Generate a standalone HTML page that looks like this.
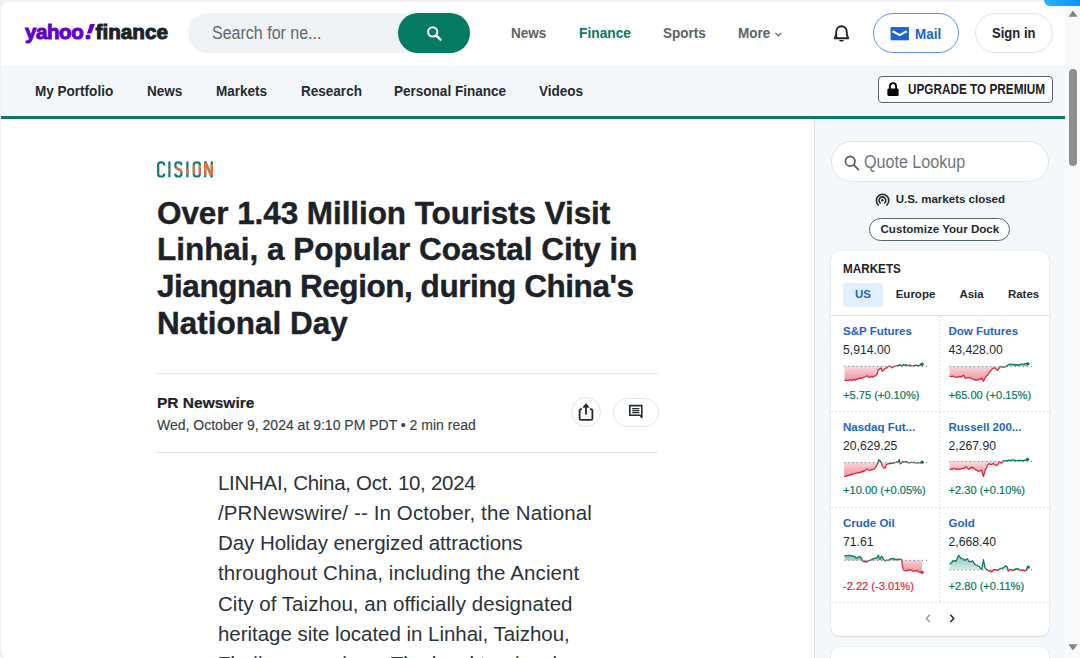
<!DOCTYPE html>
<html><head><meta charset="utf-8"><style>
html,body{margin:0;padding:0;}
body{width:1080px;height:658px;overflow:hidden;position:relative;background:#f0f0f0;font-family:"Liberation Sans",sans-serif;}
.t{position:absolute;white-space:nowrap;}
</style></head><body>
<div style="position:absolute;left:0px;top:1px;width:1080px;height:1px;background:#f6f6f6;"></div>
<div style="position:absolute;left:1px;top:2px;width:1079px;height:657px;background:#fff;border-top-left-radius:8px;border-bottom-left-radius:8px;"></div>
<div style="position:absolute;left:1px;top:66px;width:1064px;height:50px;background:#f4f7fa;"></div>
<div style="position:absolute;left:1px;top:116px;width:1064px;height:3px;background:#047a62;"></div>
<div style="position:absolute;left:814px;top:119px;width:1px;height:539px;background:#e0e4e9;"></div>
<div style="position:absolute;left:815px;top:119px;width:250px;height:539px;background:#f5f8fa;"></div>
<div style="position:absolute;left:1065px;top:6px;width:15px;height:652px;background:#fafafa;"></div>
<svg style="position:absolute;left:1068px;top:10px" width="10" height="7" viewBox="0 0 10 7"><path d="M5 0.5 L9.6 6.8 L0.4 6.8 Z" fill="#858585"/></svg>
<div style="position:absolute;left:1069px;top:69px;width:8px;height:97px;background:#8e8e8e;border-radius:4px;"></div>
<svg style="position:absolute;left:1068px;top:644px" width="10" height="7" viewBox="0 0 10 7"><path d="M0.4 0.2 L9.6 0.2 L5 6.5 Z" fill="#858585"/></svg>
<div style="position:absolute;left:1044px;top:-6px;width:40px;height:12px;background:linear-gradient(90deg,#2db3ff,#0a8fff);border-radius:6px;"></div>
<div class="t" style="left:25px;top:22.04px;font-size:20.5px;line-height:20.5px;font-weight:700;color:#6001d2;-webkit-text-stroke:1px #6001d2;letter-spacing:-0.4px;">yahoo</div>
<svg style="position:absolute;left:85px;top:23px" width="12" height="18" viewBox="0 0 12 18"><path d="M5.1 1 L10 1 L6.4 10.5 L2 10.5 Z" fill="#6001d2"/><circle cx="3" cy="14.1" r="2.5" fill="#6001d2"/></svg>
<div class="t" style="left:95.5px;top:21.87px;font-size:20.7px;line-height:20.7px;font-weight:700;color:#1d2228;-webkit-text-stroke:1px #1d2228;letter-spacing:0px;">finance</div>
<div style="position:absolute;left:188px;top:13px;width:282px;height:40px;background:#f0f3f5;border-radius:20px;"></div>
<div class="t" style="left:212px;top:24.88px;font-size:17.5px;line-height:17.5px;color:#5f676e;transform:scaleX(0.915);transform-origin:0 0;">Search for ne...</div>
<div style="position:absolute;left:398px;top:13px;width:72px;height:40px;background:#047a62;border-radius:20px;"></div>
<svg style="position:absolute;left:425px;top:24px" width="18" height="18" viewBox="0 0 18 18"><circle cx="7.7" cy="7.9" r="4.6" fill="none" stroke="#fff" stroke-width="2.1"/><path d="M11 11.3 L15.5 15.6" stroke="#fff" stroke-width="2.3" stroke-linecap="round"/></svg>
<div class="t" style="left:511px;top:26.32px;font-size:14.5px;line-height:14.5px;font-weight:700;color:#5b636a;transform:scaleX(0.93);transform-origin:0 0;">News</div>
<div class="t" style="left:578.6px;top:26.27px;font-size:14.8px;line-height:14.8px;font-weight:700;color:#047a62;transform:scaleX(0.93);transform-origin:0 0;">Finance</div>
<div class="t" style="left:662.5px;top:26.32px;font-size:14.5px;line-height:14.5px;font-weight:700;color:#5b636a;transform:scaleX(0.93);transform-origin:0 0;">Sports</div>
<div class="t" style="left:737.8px;top:26.32px;font-size:14.5px;line-height:14.5px;font-weight:700;color:#5b636a;transform:scaleX(0.93);transform-origin:0 0;">More</div>
<svg style="position:absolute;left:774px;top:31px" width="9" height="7" viewBox="0 0 9 7"><path d="M1.4 1.8 L4.3 4.8 L7.2 1.8" fill="none" stroke="#5b636a" stroke-width="1.15"/></svg>
<svg style="position:absolute;left:833px;top:24px" width="17" height="19" viewBox="0 0 17 19"><path d="M3.2 13.5 V8 C3.2 4.6 5.4 2.2 8.5 2.2 C11.6 2.2 13.8 4.6 13.8 8 V10.5 L15.2 14.2 H1.8 L3.2 11" fill="none" stroke="#1d2228" stroke-width="1.9" stroke-linejoin="round"/><path d="M6 16 H11 C10.5 17.2 9.6 17.6 8.5 17.6 C7.4 17.6 6.5 17.2 6 16 Z" fill="#1d2228"/></svg>
<div style="position:absolute;left:872.5px;top:13px;width:86px;height:40px;box-sizing:border-box;border:1px solid #5b93e6;border-radius:20px;"></div>
<svg style="position:absolute;left:890px;top:27px" width="19" height="14" viewBox="0 0 19 14"><rect x="0.6" y="0.1" width="18.3" height="13.2" fill="#1a63d9"/><path d="M2.6 4.2 L9.7 8.1 L16.7 4.2" fill="none" stroke="#fff" stroke-width="2.2"/></svg>
<div class="t" style="left:914.7px;top:26.79px;font-size:14.3px;line-height:14.3px;font-weight:700;color:#1a63d9;transform:scaleX(0.94);transform-origin:0 0;">Mail</div>
<div style="position:absolute;left:975px;top:13px;width:78px;height:40px;box-sizing:border-box;border:1px solid #e0e4e9;border-radius:20px;"></div>
<div class="t" style="left:992px;top:26.18px;font-size:14.2px;line-height:14.2px;font-weight:700;color:#1d2228;transform:scaleX(0.92);transform-origin:0 0;">Sign in</div>
<div class="t" style="left:35.3px;top:83.96px;font-size:14.1px;line-height:14.1px;font-weight:700;color:#232a31;transform:scaleX(0.96);transform-origin:0 0;">My Portfolio</div>
<div class="t" style="left:147.4px;top:83.96px;font-size:14.1px;line-height:14.1px;font-weight:700;color:#232a31;transform:scaleX(0.96);transform-origin:0 0;">News</div>
<div class="t" style="left:215.7px;top:83.96px;font-size:14.1px;line-height:14.1px;font-weight:700;color:#232a31;transform:scaleX(0.96);transform-origin:0 0;">Markets</div>
<div class="t" style="left:301px;top:83.96px;font-size:14.1px;line-height:14.1px;font-weight:700;color:#232a31;transform:scaleX(0.96);transform-origin:0 0;">Research</div>
<div class="t" style="left:394px;top:83.96px;font-size:14.1px;line-height:14.1px;font-weight:700;color:#232a31;transform:scaleX(0.96);transform-origin:0 0;">Personal Finance</div>
<div class="t" style="left:539px;top:83.96px;font-size:14.1px;line-height:14.1px;font-weight:700;color:#232a31;transform:scaleX(0.96);transform-origin:0 0;">Videos</div>
<div style="position:absolute;left:878px;top:76px;width:175px;height:27px;box-sizing:border-box;background:#fff;border:1px solid #5b636a;border-radius:4px;"></div>
<svg style="position:absolute;left:886px;top:81px" width="14" height="16" viewBox="0 0 14 16"><path d="M3.9 8 V5.6 C3.9 3.4 5.2 2.2 7 2.2 C8.8 2.2 10.1 3.4 10.1 5.6 V8" fill="none" stroke="#000" stroke-width="1.8"/><rect x="1.4" y="7.6" width="11.2" height="7.4" rx="1.2" fill="#000"/></svg>
<div class="t" style="left:907.5px;top:82.15px;font-size:14px;line-height:14px;font-weight:700;color:#1d2228;transform:scaleX(0.84);transform-origin:0 0;">UPGRADE TO PREMIUM</div>
<svg style="position:absolute;left:155px;top:159px" width="64" height="21" viewBox="0 0 64 21">
<defs><clipPath id="cl"><rect x="0" y="9.3" width="64" height="2.5"/></clipPath></defs>
</svg>
<div class="t" style="left:157px;top:197.63px;font-size:31.5px;line-height:31.5px;font-weight:700;color:#1d2228;letter-spacing:-0.08px;-webkit-text-stroke:0.4px #1d2228;">Over 1.43 Million Tourists Visit</div>
<div class="t" style="left:157px;top:233.93px;font-size:31.5px;line-height:31.5px;font-weight:700;color:#1d2228;letter-spacing:-0.03px;-webkit-text-stroke:0.4px #1d2228;">Linhai, a Popular Coastal City in</div>
<div class="t" style="left:157px;top:270.73px;font-size:31.5px;line-height:31.5px;font-weight:700;color:#1d2228;letter-spacing:-0.45px;-webkit-text-stroke:0.4px #1d2228;">Jiangnan Region, during China's</div>
<div class="t" style="left:157px;top:307.73px;font-size:31.5px;line-height:31.5px;font-weight:700;color:#1d2228;letter-spacing:0.0px;-webkit-text-stroke:0.4px #1d2228;">National Day</div>
<div style="position:absolute;left:156px;top:373px;width:502px;height:1px;background:#e0e4e9;"></div>
<div class="t" style="left:157px;top:394.88px;font-size:15.5px;line-height:15.5px;font-weight:700;color:#1d2228;-webkit-text-stroke:0.2px #1d2228;">PR Newswire</div>
<div class="t" style="left:157px;top:417.55px;font-size:14px;line-height:14px;color:#3a4249;-webkit-text-stroke:0.15px #3a4249;">Wed, October 9, 2024 at 9:10 PM PDT &bull; 2 min read</div>
<div style="position:absolute;left:571px;top:397px;width:30px;height:30px;box-sizing:border-box;border:1px solid #e0e4e9;border-radius:15px;"></div>
<div style="position:absolute;left:612.5px;top:398px;width:46px;height:29px;box-sizing:border-box;border:1px solid #e0e4e9;border-radius:15px;"></div>
<div style="position:absolute;left:156px;top:452px;width:502px;height:1px;background:#e0e4e9;"></div>
<div class="t" style="left:218px;top:472.94px;font-size:20.5px;line-height:20.5px;color:#2b333b;letter-spacing:-0.29px;">LINHAI, China, Oct. 10, 2024</div>
<div class="t" style="left:218px;top:503.12px;font-size:20.5px;line-height:20.5px;color:#2b333b;letter-spacing:0.12px;">/PRNewswire/ -- In October, the National</div>
<div class="t" style="left:218px;top:533.30px;font-size:20.5px;line-height:20.5px;color:#2b333b;letter-spacing:-0.06px;">Day Holiday energized attractions</div>
<div class="t" style="left:218px;top:563.48px;font-size:20.5px;line-height:20.5px;color:#2b333b;letter-spacing:0.12px;">throughout China, including the Ancient</div>
<div class="t" style="left:218px;top:593.66px;font-size:20.5px;line-height:20.5px;color:#2b333b;letter-spacing:0.05px;">City of Taizhou, an officially designated</div>
<div class="t" style="left:218px;top:623.84px;font-size:20.5px;line-height:20.5px;color:#2b333b;letter-spacing:-0.03px;">heritage site located in Linhai, Taizhou,</div>
<div class="t" style="left:218px;top:654.02px;font-size:20.5px;line-height:20.5px;color:#2b333b;letter-spacing:0px;">Zhejiang province. The local tourism bureau</div>
<div style="position:absolute;left:830.6px;top:141.2px;width:218.2px;height:40.5px;box-sizing:border-box;background:#fff;border:1px solid #e0e4e9;border-radius:21px;"></div>
<svg style="position:absolute;left:843px;top:154px" width="18" height="18" viewBox="0 0 18 18"><circle cx="7.2" cy="7.3" r="4.8" fill="none" stroke="#5b636a" stroke-width="1.8"/><path d="M10.6 10.8 L15.4 15.6" stroke="#5b636a" stroke-width="1.9" stroke-linecap="round"/></svg>
<div class="t" style="left:864px;top:153.06px;font-size:18px;line-height:18px;color:#6e7780;transform:scaleX(0.895);transform-origin:0 0;">Quote Lookup</div>
<div class="t" style="left:895.7px;top:193.86px;font-size:11.5px;line-height:11.5px;font-weight:700;color:#232a31;">U.S. markets closed</div>
<div style="position:absolute;left:869.4px;top:217.7px;width:140.6px;height:23.3px;box-sizing:border-box;background:#fff;border:1px solid #5b636a;border-radius:12px;"></div>
<div class="t" style="left:880.5px;top:223.38px;font-size:11.6px;line-height:11.6px;font-weight:700;color:#232a31;">Customize Your Dock</div>
<div style="position:absolute;left:830.6px;top:251.2px;width:218.4px;height:385px;background:#fff;border-radius:8px;box-shadow:0 0 1px rgba(0,0,0,0.18),0 1px 2px rgba(0,0,0,0.1);"></div>
<div style="position:absolute;left:830.6px;top:647px;width:218.4px;height:30px;background:#fff;border-radius:8px;box-shadow:0 0 1px rgba(0,0,0,0.18),0 1px 2px rgba(0,0,0,0.1);"></div>
<div class="t" style="left:842.8px;top:261.94px;font-size:13.3px;line-height:13.3px;font-weight:700;color:#1d2228;transform:scaleX(0.88);transform-origin:0 0;">MARKETS</div>
<div style="position:absolute;left:842.8px;top:282.8px;width:40px;height:23.8px;background:#e0f0ff;border-radius:4px;"></div>
<div class="t" style="left:855px;top:288.56px;font-size:11.5px;line-height:11.5px;font-weight:700;color:#1a63d9;">US</div>
<div class="t" style="left:895.7px;top:288.56px;font-size:11.5px;line-height:11.5px;font-weight:700;color:#232a31;">Europe</div>
<div class="t" style="left:959.4px;top:288.56px;font-size:11.5px;line-height:11.5px;font-weight:700;color:#232a31;">Asia</div>
<div class="t" style="left:1007.9px;top:288.56px;font-size:11.5px;line-height:11.5px;font-weight:700;color:#232a31;">Rates</div>
<div style="position:absolute;left:830.6px;top:315px;width:218.4px;height:1px;background:#e0e4e9;"></div>
<svg style="position:absolute;left:155px;top:159px" width="64" height="21" viewBox="0 0 64 21">
<g fill="none" stroke-width="2.2" stroke-linecap="butt">
<g stroke="#0e7c78">
<path d="M9.2 6.4 V5.6 C9.2 3.8 8.1 3.3 6 3.3 C3.9 3.3 3.2 3.8 3.2 5.6 V15.2 C3.2 17 3.9 17.5 6 17.5 C8.1 17.5 9.2 17 9.2 15.2 V14.4"/>
<path d="M14.4 2.5 V18.2"/>
<path d="M26.4 6.2 V5.6 C26.4 3.8 25.4 3.3 23.3 3.3 C21.2 3.3 20.4 3.8 20.4 5.6 V7 C20.4 8.6 21 9.2 22.5 9.9 L24.6 10.8 C26 11.4 26.4 12 26.4 13.6 V15.2 C26.4 17 25.4 17.5 23.3 17.5 C21.2 17.5 20.4 17 20.4 15.2 V14.4"/>
<path d="M32.4 2.5 V18.2"/>
<path d="M38.8 5.6 C38.8 3.8 39.8 3.3 41.8 3.3 C43.8 3.3 44.8 3.8 44.8 5.6 V15.2 C44.8 17 43.8 17.5 41.8 17.5 C39.8 17.5 38.8 17 38.8 15.2 Z"/>
<path d="M50.2 18.2 V2.5 L56.8 18.2 V2.5"/>
</g>
<g stroke="#f26d3d">
<path d="M14.4 9.5 V11.8"/>
<path d="M21.4 8.8 L25.8 11.2 C26.3 11.6 26.4 12.2 26.4 13.6"/>
<path d="M32.4 9.4 V15"/>
<path d="M38.8 6 V15 M44.8 6 V15"/>
<path d="M50.2 5 V16.6 M50.8 3.5 L56.2 16.6 M56.8 5 V16.6"/>
</g>
</g>
<circle cx="60" cy="3.2" r="0.6" fill="#bbb"/>
</svg>
<svg style="position:absolute;left:577px;top:401px" width="18" height="21" viewBox="0 0 18 21"><path d="M5 8.2 H4 C3.2 8.2 2.6 8.8 2.6 9.6 V17.4 C2.6 18.2 3.2 18.8 4 18.8 H14 C14.8 18.8 15.4 18.2 15.4 17.4 V9.6 C15.4 8.8 14.8 8.2 14 8.2 H13" fill="none" stroke="#232a31" stroke-width="1.8"/><path d="M9 13.4 V4.2" stroke="#232a31" stroke-width="1.8"/><path d="M6 6.2 L9 2.6 L12 6.2 Z" fill="#232a31" stroke="#232a31" stroke-width="0.8" stroke-linejoin="round"/></svg>
<svg style="position:absolute;left:628px;top:404px" width="16" height="15" viewBox="0 0 16 15"><path d="M1.8 1.6 H13.8 V11.8 L13.8 13.6 L12 11.2 H1.8 Z" fill="none" stroke="#232a31" stroke-width="1.6" stroke-linejoin="round"/><path d="M4.2 4.6 H11.4 M4.2 6.6 H11.4 M4.2 8.6 H11.4" stroke="#232a31" stroke-width="1.1"/></svg>
<svg style="position:absolute;left:874px;top:192px" width="17" height="17" viewBox="0 0 17 17"><path d="M4.3 12.9 A6.2 6.2 0 1 1 12.9 12.9" fill="none" stroke="#232a31" stroke-width="1.6" stroke-linecap="round"/><path d="M6.2 10.9 A3.4 3.4 0 1 1 10.6 10.9" fill="none" stroke="#232a31" stroke-width="1.6" stroke-linecap="round"/><circle cx="8.3" cy="8.3" r="1.25" fill="#232a31"/></svg>
<div style="position:absolute;left:939px;top:316px;width:1px;height:286px;background:repeating-linear-gradient(180deg,#dfe3e8 0 2px,transparent 2px 4px);"></div>
<div style="position:absolute;left:831px;top:411px;width:218px;height:1px;background:repeating-linear-gradient(90deg,#dfe3e8 0 2px,transparent 2px 4px);"></div>
<div style="position:absolute;left:831px;top:507px;width:218px;height:1px;background:repeating-linear-gradient(90deg,#dfe3e8 0 2px,transparent 2px 4px);"></div>
<div style="position:absolute;left:831px;top:602px;width:218px;height:1px;background:repeating-linear-gradient(90deg,#dfe3e8 0 2px,transparent 2px 4px);"></div>
<div class="t" style="left:843px;top:326.06px;font-size:11.5px;line-height:11.5px;font-weight:700;color:#1a63d9;">S&amp;P Futures</div>
<div class="t" style="left:843px;top:344.07px;font-size:12.2px;line-height:12.2px;color:#232a31;">5,914.00</div>
<div class="t" style="left:843px;top:389.60px;font-size:11.1px;line-height:11.1px;color:#047a62;-webkit-text-stroke:0.2px #047a62;">+5.75 (+0.10%)</div>
<div class="t" style="left:948.5px;top:326.06px;font-size:11.5px;line-height:11.5px;font-weight:700;color:#1a63d9;">Dow Futures</div>
<div class="t" style="left:948.5px;top:344.07px;font-size:12.2px;line-height:12.2px;color:#232a31;">43,428.00</div>
<div class="t" style="left:948.5px;top:389.60px;font-size:11.1px;line-height:11.1px;color:#047a62;-webkit-text-stroke:0.2px #047a62;">+65.00 (+0.15%)</div>
<div class="t" style="left:843px;top:421.86px;font-size:11.5px;line-height:11.5px;font-weight:700;color:#1a63d9;">Nasdaq Fut...</div>
<div class="t" style="left:843px;top:439.87px;font-size:12.2px;line-height:12.2px;color:#232a31;">20,629.25</div>
<div class="t" style="left:843px;top:485.40px;font-size:11.1px;line-height:11.1px;color:#047a62;-webkit-text-stroke:0.2px #047a62;">+10.00 (+0.05%)</div>
<div class="t" style="left:948.5px;top:421.86px;font-size:11.5px;line-height:11.5px;font-weight:700;color:#1a63d9;">Russell 200...</div>
<div class="t" style="left:948.5px;top:439.87px;font-size:12.2px;line-height:12.2px;color:#232a31;">2,267.90</div>
<div class="t" style="left:948.5px;top:485.40px;font-size:11.1px;line-height:11.1px;color:#047a62;-webkit-text-stroke:0.2px #047a62;">+2.30 (+0.10%)</div>
<div class="t" style="left:843px;top:517.66px;font-size:11.5px;line-height:11.5px;font-weight:700;color:#1a63d9;">Crude Oil</div>
<div class="t" style="left:843px;top:535.67px;font-size:12.2px;line-height:12.2px;color:#232a31;">71.61</div>
<div class="t" style="left:843px;top:581.20px;font-size:11.1px;line-height:11.1px;color:#e0243a;-webkit-text-stroke:0.2px #e0243a;">-2.22 (-3.01%)</div>
<div class="t" style="left:948.5px;top:517.66px;font-size:11.5px;line-height:11.5px;font-weight:700;color:#1a63d9;">Gold</div>
<div class="t" style="left:948.5px;top:535.67px;font-size:12.2px;line-height:12.2px;color:#232a31;">2,668.40</div>
<div class="t" style="left:948.5px;top:581.20px;font-size:11.1px;line-height:11.1px;color:#047a62;-webkit-text-stroke:0.2px #047a62;">+2.80 (+0.11%)</div>
<svg style="position:absolute;left:922px;top:612px" width="12" height="12" viewBox="0 0 12 12"><path d="M7.8 2.8 L4.4 6.4 L7.8 10" fill="none" stroke="#8c9399" stroke-width="1.3"/></svg>
<svg style="position:absolute;left:946px;top:612px" width="12" height="12" viewBox="0 0 12 12"><path d="M4.4 2.8 L7.8 6.4 L4.4 10" fill="none" stroke="#232a31" stroke-width="1.5"/></svg>
<svg style="position:absolute;left:840px;top:358px" width="90" height="27" viewBox="0 0 1080 324">
<defs>
<clipPath id="up0"><rect x="0" y="0" width="1080" height="100"/></clipPath>
<clipPath id="dn0"><rect x="0" y="100" width="1080" height="224"/></clipPath>
<linearGradient id="gr0" x1="0" y1="0" x2="0" y2="1"><stop offset="0" stop-color="#e0243a" stop-opacity="0.12"/><stop offset="1" stop-color="#e0243a" stop-opacity="0.5"/></linearGradient>
<linearGradient id="gg0" x1="0" y1="0" x2="0" y2="1"><stop offset="0" stop-color="#047a62" stop-opacity="0.45"/><stop offset="1" stop-color="#047a62" stop-opacity="0.1"/></linearGradient>
</defs>
<rect x="52" y="93" width="14" height="14" fill="#8c9399"/><rect x="101" y="93" width="14" height="14" fill="#8c9399"/><rect x="150" y="93" width="14" height="14" fill="#8c9399"/><rect x="199" y="93" width="14" height="14" fill="#8c9399"/><rect x="248" y="93" width="14" height="14" fill="#8c9399"/><rect x="297" y="93" width="14" height="14" fill="#8c9399"/><rect x="346" y="93" width="14" height="14" fill="#8c9399"/><rect x="395" y="93" width="14" height="14" fill="#8c9399"/><rect x="444" y="93" width="14" height="14" fill="#8c9399"/><rect x="493" y="93" width="14" height="14" fill="#8c9399"/><rect x="542" y="93" width="14" height="14" fill="#8c9399"/><rect x="591" y="93" width="14" height="14" fill="#8c9399"/><rect x="640" y="93" width="14" height="14" fill="#8c9399"/><rect x="689" y="93" width="14" height="14" fill="#8c9399"/><rect x="738" y="93" width="14" height="14" fill="#8c9399"/><rect x="787" y="93" width="14" height="14" fill="#8c9399"/><rect x="836" y="93" width="14" height="14" fill="#8c9399"/><rect x="885" y="93" width="14" height="14" fill="#8c9399"/><rect x="934" y="93" width="14" height="14" fill="#8c9399"/><rect x="983" y="93" width="14" height="14" fill="#8c9399"/><rect x="1032" y="93" width="14" height="14" fill="#8c9399"/>
<path d="M55,270 L64,266 L73,270 L82,267 L91,270 L100,268 L110,269 L120,261 L130,259 L140,270 L150,265 L160,260 L170,258 L180,267 L190,258 L200,254 L210,256 L220,248 L230,245 L240,245 L250,236 L260,241 L270,242 L280,235 L290,230 L300,228 L310,222 L320,215 L330,215 L340,230 L350,232 L360,232 L370,226 L380,221 L390,232 L400,225 L410,218 L420,216 L430,212 L440,200 L450,173 L460,140 L470,139 L480,125 L490,120 L500,144 L510,160 L525,140 L538,129 L550,120 L560,121 L570,115 L580,99 L590,100 L600,100 L610,106 L620,115 L630,118 L640,107 L650,106 L660,100 L670,95 L680,95 L690,91 L700,90 L710,83 L720,80 L730,91 L740,100 L750,90 L760,78 L770,84 L780,82 L790,86 L800,80 L810,87 L820,91 L830,88 L840,83 L850,90 L860,95 L870,96 L880,94 L890,89 L900,88 L910,91 L920,85 L930,94 L940,91 L950,90 L962,82 L973,74 L985,75 L985,100 L55,100 Z" fill="url(#gr0)" clip-path="url(#dn0)"/>
<path d="M55,270 L64,266 L73,270 L82,267 L91,270 L100,268 L110,269 L120,261 L130,259 L140,270 L150,265 L160,260 L170,258 L180,267 L190,258 L200,254 L210,256 L220,248 L230,245 L240,245 L250,236 L260,241 L270,242 L280,235 L290,230 L300,228 L310,222 L320,215 L330,215 L340,230 L350,232 L360,232 L370,226 L380,221 L390,232 L400,225 L410,218 L420,216 L430,212 L440,200 L450,173 L460,140 L470,139 L480,125 L490,120 L500,144 L510,160 L525,140 L538,129 L550,120 L560,121 L570,115 L580,99 L590,100 L600,100 L610,106 L620,115 L630,118 L640,107 L650,106 L660,100 L670,95 L680,95 L690,91 L700,90 L710,83 L720,80 L730,91 L740,100 L750,90 L760,78 L770,84 L780,82 L790,86 L800,80 L810,87 L820,91 L830,88 L840,83 L850,90 L860,95 L870,96 L880,94 L890,89 L900,88 L910,91 L920,85 L930,94 L940,91 L950,90 L962,82 L973,74 L985,75 L985,100 L55,100 Z" fill="url(#gg0)" clip-path="url(#up0)"/>
<path d="M55,270 L64,266 L73,270 L82,267 L91,270 L100,268 L110,269 L120,261 L130,259 L140,270 L150,265 L160,260 L170,258 L180,267 L190,258 L200,254 L210,256 L220,248 L230,245 L240,245 L250,236 L260,241 L270,242 L280,235 L290,230 L300,228 L310,222 L320,215 L330,215 L340,230 L350,232 L360,232 L370,226 L380,221 L390,232 L400,225 L410,218 L420,216 L430,212 L440,200 L450,173 L460,140 L470,139 L480,125 L490,120 L500,144 L510,160 L525,140 L538,129 L550,120 L560,121 L570,115 L580,99 L590,100 L600,100 L610,106 L620,115 L630,118 L640,107 L650,106 L660,100 L670,95 L680,95 L690,91 L700,90 L710,83 L720,80 L730,91 L740,100 L750,90 L760,78 L770,84 L780,82 L790,86 L800,80 L810,87 L820,91 L830,88 L840,83 L850,90 L860,95 L870,96 L880,94 L890,89 L900,88 L910,91 L920,85 L930,94 L940,91 L950,90 L962,82 L973,74 L985,75" fill="none" stroke="#e0243a" stroke-width="15" stroke-linejoin="round" clip-path="url(#dn0)"/>
<path d="M55,270 L64,266 L73,270 L82,267 L91,270 L100,268 L110,269 L120,261 L130,259 L140,270 L150,265 L160,260 L170,258 L180,267 L190,258 L200,254 L210,256 L220,248 L230,245 L240,245 L250,236 L260,241 L270,242 L280,235 L290,230 L300,228 L310,222 L320,215 L330,215 L340,230 L350,232 L360,232 L370,226 L380,221 L390,232 L400,225 L410,218 L420,216 L430,212 L440,200 L450,173 L460,140 L470,139 L480,125 L490,120 L500,144 L510,160 L525,140 L538,129 L550,120 L560,121 L570,115 L580,99 L590,100 L600,100 L610,106 L620,115 L630,118 L640,107 L650,106 L660,100 L670,95 L680,95 L690,91 L700,90 L710,83 L720,80 L730,91 L740,100 L750,90 L760,78 L770,84 L780,82 L790,86 L800,80 L810,87 L820,91 L830,88 L840,83 L850,90 L860,95 L870,96 L880,94 L890,89 L900,88 L910,91 L920,85 L930,94 L940,91 L950,90 L962,82 L973,74 L985,75" fill="none" stroke="#047a62" stroke-width="15" stroke-linejoin="round" clip-path="url(#up0)"/>
<circle cx="985" cy="75" r="20" fill="#047a62"/>
</svg>
<svg style="position:absolute;left:945px;top:358px" width="90" height="27" viewBox="0 0 1080 324">
<defs>
<clipPath id="up1"><rect x="0" y="0" width="1080" height="103"/></clipPath>
<clipPath id="dn1"><rect x="0" y="103" width="1080" height="221"/></clipPath>
<linearGradient id="gr1" x1="0" y1="0" x2="0" y2="1"><stop offset="0" stop-color="#e0243a" stop-opacity="0.12"/><stop offset="1" stop-color="#e0243a" stop-opacity="0.5"/></linearGradient>
<linearGradient id="gg1" x1="0" y1="0" x2="0" y2="1"><stop offset="0" stop-color="#047a62" stop-opacity="0.45"/><stop offset="1" stop-color="#047a62" stop-opacity="0.1"/></linearGradient>
</defs>
<rect x="52" y="96" width="14" height="14" fill="#8c9399"/><rect x="101" y="96" width="14" height="14" fill="#8c9399"/><rect x="150" y="96" width="14" height="14" fill="#8c9399"/><rect x="199" y="96" width="14" height="14" fill="#8c9399"/><rect x="248" y="96" width="14" height="14" fill="#8c9399"/><rect x="297" y="96" width="14" height="14" fill="#8c9399"/><rect x="346" y="96" width="14" height="14" fill="#8c9399"/><rect x="395" y="96" width="14" height="14" fill="#8c9399"/><rect x="444" y="96" width="14" height="14" fill="#8c9399"/><rect x="493" y="96" width="14" height="14" fill="#8c9399"/><rect x="542" y="96" width="14" height="14" fill="#8c9399"/><rect x="591" y="96" width="14" height="14" fill="#8c9399"/><rect x="640" y="96" width="14" height="14" fill="#8c9399"/><rect x="689" y="96" width="14" height="14" fill="#8c9399"/><rect x="738" y="96" width="14" height="14" fill="#8c9399"/><rect x="787" y="96" width="14" height="14" fill="#8c9399"/><rect x="836" y="96" width="14" height="14" fill="#8c9399"/><rect x="885" y="96" width="14" height="14" fill="#8c9399"/><rect x="934" y="96" width="14" height="14" fill="#8c9399"/><rect x="983" y="96" width="14" height="14" fill="#8c9399"/><rect x="1032" y="96" width="14" height="14" fill="#8c9399"/>
<path d="M55,220 L64,221 L73,220 L82,222 L91,217 L100,222 L110,228 L120,231 L130,230 L140,225 L150,232 L160,230 L170,225 L180,221 L190,229 L200,220 L210,219 L220,205 L230,216 L240,240 L250,244 L260,240 L270,236 L280,234 L290,238 L300,235 L310,239 L320,248 L330,252 L340,255 L350,252 L360,262 L370,267 L380,262 L390,268 L400,262 L410,253 L420,252 L430,258 L440,240 L450,255 L460,280 L470,266 L480,240 L490,225 L500,213 L510,208 L520,190 L530,174 L540,164 L550,150 L560,139 L570,124 L580,120 L590,120 L600,118 L610,133 L620,135 L630,150 L640,133 L650,122 L660,110 L670,102 L680,107 L690,111 L700,105 L710,110 L720,110 L730,103 L740,95 L750,92 L760,80 L770,74 L780,78 L790,74 L800,75 L810,78 L820,74 L830,85 L840,77 L850,85 L860,79 L870,87 L880,87 L890,78 L900,78 L910,76 L920,73 L930,73 L940,77 L950,75 L959,69 L968,68 L977,71 L986,66 L995,70 L995,103 L55,103 Z" fill="url(#gr1)" clip-path="url(#dn1)"/>
<path d="M55,220 L64,221 L73,220 L82,222 L91,217 L100,222 L110,228 L120,231 L130,230 L140,225 L150,232 L160,230 L170,225 L180,221 L190,229 L200,220 L210,219 L220,205 L230,216 L240,240 L250,244 L260,240 L270,236 L280,234 L290,238 L300,235 L310,239 L320,248 L330,252 L340,255 L350,252 L360,262 L370,267 L380,262 L390,268 L400,262 L410,253 L420,252 L430,258 L440,240 L450,255 L460,280 L470,266 L480,240 L490,225 L500,213 L510,208 L520,190 L530,174 L540,164 L550,150 L560,139 L570,124 L580,120 L590,120 L600,118 L610,133 L620,135 L630,150 L640,133 L650,122 L660,110 L670,102 L680,107 L690,111 L700,105 L710,110 L720,110 L730,103 L740,95 L750,92 L760,80 L770,74 L780,78 L790,74 L800,75 L810,78 L820,74 L830,85 L840,77 L850,85 L860,79 L870,87 L880,87 L890,78 L900,78 L910,76 L920,73 L930,73 L940,77 L950,75 L959,69 L968,68 L977,71 L986,66 L995,70 L995,103 L55,103 Z" fill="url(#gg1)" clip-path="url(#up1)"/>
<path d="M55,220 L64,221 L73,220 L82,222 L91,217 L100,222 L110,228 L120,231 L130,230 L140,225 L150,232 L160,230 L170,225 L180,221 L190,229 L200,220 L210,219 L220,205 L230,216 L240,240 L250,244 L260,240 L270,236 L280,234 L290,238 L300,235 L310,239 L320,248 L330,252 L340,255 L350,252 L360,262 L370,267 L380,262 L390,268 L400,262 L410,253 L420,252 L430,258 L440,240 L450,255 L460,280 L470,266 L480,240 L490,225 L500,213 L510,208 L520,190 L530,174 L540,164 L550,150 L560,139 L570,124 L580,120 L590,120 L600,118 L610,133 L620,135 L630,150 L640,133 L650,122 L660,110 L670,102 L680,107 L690,111 L700,105 L710,110 L720,110 L730,103 L740,95 L750,92 L760,80 L770,74 L780,78 L790,74 L800,75 L810,78 L820,74 L830,85 L840,77 L850,85 L860,79 L870,87 L880,87 L890,78 L900,78 L910,76 L920,73 L930,73 L940,77 L950,75 L959,69 L968,68 L977,71 L986,66 L995,70" fill="none" stroke="#e0243a" stroke-width="15" stroke-linejoin="round" clip-path="url(#dn1)"/>
<path d="M55,220 L64,221 L73,220 L82,222 L91,217 L100,222 L110,228 L120,231 L130,230 L140,225 L150,232 L160,230 L170,225 L180,221 L190,229 L200,220 L210,219 L220,205 L230,216 L240,240 L250,244 L260,240 L270,236 L280,234 L290,238 L300,235 L310,239 L320,248 L330,252 L340,255 L350,252 L360,262 L370,267 L380,262 L390,268 L400,262 L410,253 L420,252 L430,258 L440,240 L450,255 L460,280 L470,266 L480,240 L490,225 L500,213 L510,208 L520,190 L530,174 L540,164 L550,150 L560,139 L570,124 L580,120 L590,120 L600,118 L610,133 L620,135 L630,150 L640,133 L650,122 L660,110 L670,102 L680,107 L690,111 L700,105 L710,110 L720,110 L730,103 L740,95 L750,92 L760,80 L770,74 L780,78 L790,74 L800,75 L810,78 L820,74 L830,85 L840,77 L850,85 L860,79 L870,87 L880,87 L890,78 L900,78 L910,76 L920,73 L930,73 L940,77 L950,75 L959,69 L968,68 L977,71 L986,66 L995,70" fill="none" stroke="#047a62" stroke-width="15" stroke-linejoin="round" clip-path="url(#up1)"/>
<circle cx="995" cy="70" r="20" fill="#047a62"/>
</svg>
<svg style="position:absolute;left:840px;top:454px" width="90" height="27" viewBox="0 0 1080 324">
<defs>
<clipPath id="up2"><rect x="0" y="0" width="1080" height="103"/></clipPath>
<clipPath id="dn2"><rect x="0" y="103" width="1080" height="221"/></clipPath>
<linearGradient id="gr2" x1="0" y1="0" x2="0" y2="1"><stop offset="0" stop-color="#e0243a" stop-opacity="0.12"/><stop offset="1" stop-color="#e0243a" stop-opacity="0.5"/></linearGradient>
<linearGradient id="gg2" x1="0" y1="0" x2="0" y2="1"><stop offset="0" stop-color="#047a62" stop-opacity="0.45"/><stop offset="1" stop-color="#047a62" stop-opacity="0.1"/></linearGradient>
</defs>
<rect x="52" y="96" width="14" height="14" fill="#8c9399"/><rect x="101" y="96" width="14" height="14" fill="#8c9399"/><rect x="150" y="96" width="14" height="14" fill="#8c9399"/><rect x="199" y="96" width="14" height="14" fill="#8c9399"/><rect x="248" y="96" width="14" height="14" fill="#8c9399"/><rect x="297" y="96" width="14" height="14" fill="#8c9399"/><rect x="346" y="96" width="14" height="14" fill="#8c9399"/><rect x="395" y="96" width="14" height="14" fill="#8c9399"/><rect x="444" y="96" width="14" height="14" fill="#8c9399"/><rect x="493" y="96" width="14" height="14" fill="#8c9399"/><rect x="542" y="96" width="14" height="14" fill="#8c9399"/><rect x="591" y="96" width="14" height="14" fill="#8c9399"/><rect x="640" y="96" width="14" height="14" fill="#8c9399"/><rect x="689" y="96" width="14" height="14" fill="#8c9399"/><rect x="738" y="96" width="14" height="14" fill="#8c9399"/><rect x="787" y="96" width="14" height="14" fill="#8c9399"/><rect x="836" y="96" width="14" height="14" fill="#8c9399"/><rect x="885" y="96" width="14" height="14" fill="#8c9399"/><rect x="934" y="96" width="14" height="14" fill="#8c9399"/><rect x="983" y="96" width="14" height="14" fill="#8c9399"/><rect x="1032" y="96" width="14" height="14" fill="#8c9399"/>
<path d="M50,270 L60,267 L70,268 L80,267 L90,255 L100,255 L110,257 L120,254 L130,251 L140,242 L150,245 L160,235 L170,237 L180,239 L190,230 L200,230 L210,227 L220,221 L230,226 L240,224 L250,215 L260,211 L270,216 L280,200 L290,207 L300,200 L310,195 L320,180 L330,180 L340,193 L350,195 L360,194 L370,197 L380,185 L390,188 L400,185 L410,182 L420,170 L430,160 L442,132 L455,110 L465,70 L478,77 L490,95 L505,140 L520,160 L530,171 L540,170 L555,130 L568,122 L580,115 L590,121 L600,107 L610,116 L620,110 L630,113 L640,113 L650,99 L660,105 L670,101 L680,94 L690,101 L700,95 L710,65 L720,120 L730,110 L740,110 L750,95 L760,92 L770,96 L780,96 L790,90 L800,90 L810,98 L820,108 L830,105 L840,104 L850,101 L860,99 L870,105 L880,100 L890,98 L900,106 L910,108 L920,110 L930,109 L940,101 L950,105 L962,105 L973,106 L985,98 L985,103 L50,103 Z" fill="url(#gr2)" clip-path="url(#dn2)"/>
<path d="M50,270 L60,267 L70,268 L80,267 L90,255 L100,255 L110,257 L120,254 L130,251 L140,242 L150,245 L160,235 L170,237 L180,239 L190,230 L200,230 L210,227 L220,221 L230,226 L240,224 L250,215 L260,211 L270,216 L280,200 L290,207 L300,200 L310,195 L320,180 L330,180 L340,193 L350,195 L360,194 L370,197 L380,185 L390,188 L400,185 L410,182 L420,170 L430,160 L442,132 L455,110 L465,70 L478,77 L490,95 L505,140 L520,160 L530,171 L540,170 L555,130 L568,122 L580,115 L590,121 L600,107 L610,116 L620,110 L630,113 L640,113 L650,99 L660,105 L670,101 L680,94 L690,101 L700,95 L710,65 L720,120 L730,110 L740,110 L750,95 L760,92 L770,96 L780,96 L790,90 L800,90 L810,98 L820,108 L830,105 L840,104 L850,101 L860,99 L870,105 L880,100 L890,98 L900,106 L910,108 L920,110 L930,109 L940,101 L950,105 L962,105 L973,106 L985,98 L985,103 L50,103 Z" fill="url(#gg2)" clip-path="url(#up2)"/>
<path d="M50,270 L60,267 L70,268 L80,267 L90,255 L100,255 L110,257 L120,254 L130,251 L140,242 L150,245 L160,235 L170,237 L180,239 L190,230 L200,230 L210,227 L220,221 L230,226 L240,224 L250,215 L260,211 L270,216 L280,200 L290,207 L300,200 L310,195 L320,180 L330,180 L340,193 L350,195 L360,194 L370,197 L380,185 L390,188 L400,185 L410,182 L420,170 L430,160 L442,132 L455,110 L465,70 L478,77 L490,95 L505,140 L520,160 L530,171 L540,170 L555,130 L568,122 L580,115 L590,121 L600,107 L610,116 L620,110 L630,113 L640,113 L650,99 L660,105 L670,101 L680,94 L690,101 L700,95 L710,65 L720,120 L730,110 L740,110 L750,95 L760,92 L770,96 L780,96 L790,90 L800,90 L810,98 L820,108 L830,105 L840,104 L850,101 L860,99 L870,105 L880,100 L890,98 L900,106 L910,108 L920,110 L930,109 L940,101 L950,105 L962,105 L973,106 L985,98" fill="none" stroke="#e0243a" stroke-width="15" stroke-linejoin="round" clip-path="url(#dn2)"/>
<path d="M50,270 L60,267 L70,268 L80,267 L90,255 L100,255 L110,257 L120,254 L130,251 L140,242 L150,245 L160,235 L170,237 L180,239 L190,230 L200,230 L210,227 L220,221 L230,226 L240,224 L250,215 L260,211 L270,216 L280,200 L290,207 L300,200 L310,195 L320,180 L330,180 L340,193 L350,195 L360,194 L370,197 L380,185 L390,188 L400,185 L410,182 L420,170 L430,160 L442,132 L455,110 L465,70 L478,77 L490,95 L505,140 L520,160 L530,171 L540,170 L555,130 L568,122 L580,115 L590,121 L600,107 L610,116 L620,110 L630,113 L640,113 L650,99 L660,105 L670,101 L680,94 L690,101 L700,95 L710,65 L720,120 L730,110 L740,110 L750,95 L760,92 L770,96 L780,96 L790,90 L800,90 L810,98 L820,108 L830,105 L840,104 L850,101 L860,99 L870,105 L880,100 L890,98 L900,106 L910,108 L920,110 L930,109 L940,101 L950,105 L962,105 L973,106 L985,98" fill="none" stroke="#047a62" stroke-width="15" stroke-linejoin="round" clip-path="url(#up2)"/>
<circle cx="985" cy="98" r="20" fill="#047a62"/>
</svg>
<svg style="position:absolute;left:945px;top:454px" width="90" height="27" viewBox="0 0 1080 324">
<defs>
<clipPath id="up3"><rect x="0" y="0" width="1080" height="90"/></clipPath>
<clipPath id="dn3"><rect x="0" y="90" width="1080" height="234"/></clipPath>
<linearGradient id="gr3" x1="0" y1="0" x2="0" y2="1"><stop offset="0" stop-color="#e0243a" stop-opacity="0.12"/><stop offset="1" stop-color="#e0243a" stop-opacity="0.5"/></linearGradient>
<linearGradient id="gg3" x1="0" y1="0" x2="0" y2="1"><stop offset="0" stop-color="#047a62" stop-opacity="0.45"/><stop offset="1" stop-color="#047a62" stop-opacity="0.1"/></linearGradient>
</defs>
<rect x="52" y="83" width="14" height="14" fill="#8c9399"/><rect x="101" y="83" width="14" height="14" fill="#8c9399"/><rect x="150" y="83" width="14" height="14" fill="#8c9399"/><rect x="199" y="83" width="14" height="14" fill="#8c9399"/><rect x="248" y="83" width="14" height="14" fill="#8c9399"/><rect x="297" y="83" width="14" height="14" fill="#8c9399"/><rect x="346" y="83" width="14" height="14" fill="#8c9399"/><rect x="395" y="83" width="14" height="14" fill="#8c9399"/><rect x="444" y="83" width="14" height="14" fill="#8c9399"/><rect x="493" y="83" width="14" height="14" fill="#8c9399"/><rect x="542" y="83" width="14" height="14" fill="#8c9399"/><rect x="591" y="83" width="14" height="14" fill="#8c9399"/><rect x="640" y="83" width="14" height="14" fill="#8c9399"/><rect x="689" y="83" width="14" height="14" fill="#8c9399"/><rect x="738" y="83" width="14" height="14" fill="#8c9399"/><rect x="787" y="83" width="14" height="14" fill="#8c9399"/><rect x="836" y="83" width="14" height="14" fill="#8c9399"/><rect x="885" y="83" width="14" height="14" fill="#8c9399"/><rect x="934" y="83" width="14" height="14" fill="#8c9399"/><rect x="983" y="83" width="14" height="14" fill="#8c9399"/><rect x="1032" y="83" width="14" height="14" fill="#8c9399"/>
<path d="M55,185 L64,186 L73,186 L82,175 L91,184 L100,175 L110,173 L120,181 L130,175 L140,187 L150,185 L160,178 L170,184 L180,182 L190,181 L200,175 L210,171 L220,173 L230,172 L240,156 L250,159 L260,155 L270,171 L280,178 L290,185 L300,174 L310,162 L320,155 L330,168 L340,162 L350,177 L360,180 L370,192 L380,190 L390,200 L400,210 L410,204 L420,203 L430,197 L440,195 L450,238 L460,270 L470,241 L480,200 L490,177 L500,166 L510,134 L520,120 L530,116 L540,126 L550,125 L560,124 L570,119 L580,110 L590,124 L600,130 L610,129 L620,140 L630,130 L640,119 L650,100 L660,98 L670,107 L680,110 L690,93 L700,85 L710,79 L720,82 L730,84 L740,80 L750,85 L760,72 L770,75 L780,80 L790,75 L800,70 L810,72 L820,70 L830,78 L840,75 L850,80 L860,81 L870,80 L880,75 L890,80 L900,75 L910,75 L920,77 L930,83 L940,76 L950,80 L960,72 L970,74 L980,68 L990,65 L990,90 L55,90 Z" fill="url(#gr3)" clip-path="url(#dn3)"/>
<path d="M55,185 L64,186 L73,186 L82,175 L91,184 L100,175 L110,173 L120,181 L130,175 L140,187 L150,185 L160,178 L170,184 L180,182 L190,181 L200,175 L210,171 L220,173 L230,172 L240,156 L250,159 L260,155 L270,171 L280,178 L290,185 L300,174 L310,162 L320,155 L330,168 L340,162 L350,177 L360,180 L370,192 L380,190 L390,200 L400,210 L410,204 L420,203 L430,197 L440,195 L450,238 L460,270 L470,241 L480,200 L490,177 L500,166 L510,134 L520,120 L530,116 L540,126 L550,125 L560,124 L570,119 L580,110 L590,124 L600,130 L610,129 L620,140 L630,130 L640,119 L650,100 L660,98 L670,107 L680,110 L690,93 L700,85 L710,79 L720,82 L730,84 L740,80 L750,85 L760,72 L770,75 L780,80 L790,75 L800,70 L810,72 L820,70 L830,78 L840,75 L850,80 L860,81 L870,80 L880,75 L890,80 L900,75 L910,75 L920,77 L930,83 L940,76 L950,80 L960,72 L970,74 L980,68 L990,65 L990,90 L55,90 Z" fill="url(#gg3)" clip-path="url(#up3)"/>
<path d="M55,185 L64,186 L73,186 L82,175 L91,184 L100,175 L110,173 L120,181 L130,175 L140,187 L150,185 L160,178 L170,184 L180,182 L190,181 L200,175 L210,171 L220,173 L230,172 L240,156 L250,159 L260,155 L270,171 L280,178 L290,185 L300,174 L310,162 L320,155 L330,168 L340,162 L350,177 L360,180 L370,192 L380,190 L390,200 L400,210 L410,204 L420,203 L430,197 L440,195 L450,238 L460,270 L470,241 L480,200 L490,177 L500,166 L510,134 L520,120 L530,116 L540,126 L550,125 L560,124 L570,119 L580,110 L590,124 L600,130 L610,129 L620,140 L630,130 L640,119 L650,100 L660,98 L670,107 L680,110 L690,93 L700,85 L710,79 L720,82 L730,84 L740,80 L750,85 L760,72 L770,75 L780,80 L790,75 L800,70 L810,72 L820,70 L830,78 L840,75 L850,80 L860,81 L870,80 L880,75 L890,80 L900,75 L910,75 L920,77 L930,83 L940,76 L950,80 L960,72 L970,74 L980,68 L990,65" fill="none" stroke="#e0243a" stroke-width="15" stroke-linejoin="round" clip-path="url(#dn3)"/>
<path d="M55,185 L64,186 L73,186 L82,175 L91,184 L100,175 L110,173 L120,181 L130,175 L140,187 L150,185 L160,178 L170,184 L180,182 L190,181 L200,175 L210,171 L220,173 L230,172 L240,156 L250,159 L260,155 L270,171 L280,178 L290,185 L300,174 L310,162 L320,155 L330,168 L340,162 L350,177 L360,180 L370,192 L380,190 L390,200 L400,210 L410,204 L420,203 L430,197 L440,195 L450,238 L460,270 L470,241 L480,200 L490,177 L500,166 L510,134 L520,120 L530,116 L540,126 L550,125 L560,124 L570,119 L580,110 L590,124 L600,130 L610,129 L620,140 L630,130 L640,119 L650,100 L660,98 L670,107 L680,110 L690,93 L700,85 L710,79 L720,82 L730,84 L740,80 L750,85 L760,72 L770,75 L780,80 L790,75 L800,70 L810,72 L820,70 L830,78 L840,75 L850,80 L860,81 L870,80 L880,75 L890,80 L900,75 L910,75 L920,77 L930,83 L940,76 L950,80 L960,72 L970,74 L980,68 L990,65" fill="none" stroke="#047a62" stroke-width="15" stroke-linejoin="round" clip-path="url(#up3)"/>
<circle cx="990" cy="65" r="20" fill="#047a62"/>
</svg>
<svg style="position:absolute;left:840px;top:550px" width="90" height="27" viewBox="0 0 1080 324">
<defs>
<clipPath id="up4"><rect x="0" y="0" width="1080" height="125"/></clipPath>
<clipPath id="dn4"><rect x="0" y="125" width="1080" height="199"/></clipPath>
<linearGradient id="gr4" x1="0" y1="0" x2="0" y2="1"><stop offset="0" stop-color="#e0243a" stop-opacity="0.12"/><stop offset="1" stop-color="#e0243a" stop-opacity="0.5"/></linearGradient>
<linearGradient id="gg4" x1="0" y1="0" x2="0" y2="1"><stop offset="0" stop-color="#047a62" stop-opacity="0.45"/><stop offset="1" stop-color="#047a62" stop-opacity="0.1"/></linearGradient>
</defs>
<rect x="52" y="118" width="14" height="14" fill="#8c9399"/><rect x="101" y="118" width="14" height="14" fill="#8c9399"/><rect x="150" y="118" width="14" height="14" fill="#8c9399"/><rect x="199" y="118" width="14" height="14" fill="#8c9399"/><rect x="248" y="118" width="14" height="14" fill="#8c9399"/><rect x="297" y="118" width="14" height="14" fill="#8c9399"/><rect x="346" y="118" width="14" height="14" fill="#8c9399"/><rect x="395" y="118" width="14" height="14" fill="#8c9399"/><rect x="444" y="118" width="14" height="14" fill="#8c9399"/><rect x="493" y="118" width="14" height="14" fill="#8c9399"/><rect x="542" y="118" width="14" height="14" fill="#8c9399"/><rect x="591" y="118" width="14" height="14" fill="#8c9399"/><rect x="640" y="118" width="14" height="14" fill="#8c9399"/><rect x="689" y="118" width="14" height="14" fill="#8c9399"/><rect x="738" y="118" width="14" height="14" fill="#8c9399"/><rect x="787" y="118" width="14" height="14" fill="#8c9399"/><rect x="836" y="118" width="14" height="14" fill="#8c9399"/><rect x="885" y="118" width="14" height="14" fill="#8c9399"/><rect x="934" y="118" width="14" height="14" fill="#8c9399"/><rect x="983" y="118" width="14" height="14" fill="#8c9399"/><rect x="1032" y="118" width="14" height="14" fill="#8c9399"/>
<path d="M55,75 L64,67 L73,67 L82,69 L91,72 L100,68 L110,64 L120,64 L130,67 L140,75 L150,72 L160,70 L170,81 L180,80 L190,92 L200,100 L210,89 L220,88 L230,81 L240,75 L250,91 L260,110 L270,125 L280,139 L290,133 L300,145 L310,135 L320,145 L330,135 L340,129 L350,130 L360,123 L370,118 L380,121 L390,106 L400,105 L410,99 L420,101 L430,98 L440,95 L450,84 L460,60 L470,90 L480,110 L490,90 L500,75 L510,88 L520,110 L530,121 L540,130 L550,130 L560,119 L570,125 L580,123 L590,116 L600,110 L610,103 L620,107 L630,100 L640,107 L650,104 L660,114 L670,112 L680,120 L690,111 L700,113 L710,110 L720,110 L730,111 L740,115 L745,160 L760,240 L770,243 L780,247 L790,250 L800,245 L810,248 L820,245 L830,235 L840,243 L850,240 L860,242 L870,253 L880,255 L890,254 L900,255 L910,246 L920,250 L930,250 L940,264 L950,262 L962,265 L973,269 L985,268 L985,125 L55,125 Z" fill="url(#gr4)" clip-path="url(#dn4)"/>
<path d="M55,75 L64,67 L73,67 L82,69 L91,72 L100,68 L110,64 L120,64 L130,67 L140,75 L150,72 L160,70 L170,81 L180,80 L190,92 L200,100 L210,89 L220,88 L230,81 L240,75 L250,91 L260,110 L270,125 L280,139 L290,133 L300,145 L310,135 L320,145 L330,135 L340,129 L350,130 L360,123 L370,118 L380,121 L390,106 L400,105 L410,99 L420,101 L430,98 L440,95 L450,84 L460,60 L470,90 L480,110 L490,90 L500,75 L510,88 L520,110 L530,121 L540,130 L550,130 L560,119 L570,125 L580,123 L590,116 L600,110 L610,103 L620,107 L630,100 L640,107 L650,104 L660,114 L670,112 L680,120 L690,111 L700,113 L710,110 L720,110 L730,111 L740,115 L745,160 L760,240 L770,243 L780,247 L790,250 L800,245 L810,248 L820,245 L830,235 L840,243 L850,240 L860,242 L870,253 L880,255 L890,254 L900,255 L910,246 L920,250 L930,250 L940,264 L950,262 L962,265 L973,269 L985,268 L985,125 L55,125 Z" fill="url(#gg4)" clip-path="url(#up4)"/>
<path d="M55,75 L64,67 L73,67 L82,69 L91,72 L100,68 L110,64 L120,64 L130,67 L140,75 L150,72 L160,70 L170,81 L180,80 L190,92 L200,100 L210,89 L220,88 L230,81 L240,75 L250,91 L260,110 L270,125 L280,139 L290,133 L300,145 L310,135 L320,145 L330,135 L340,129 L350,130 L360,123 L370,118 L380,121 L390,106 L400,105 L410,99 L420,101 L430,98 L440,95 L450,84 L460,60 L470,90 L480,110 L490,90 L500,75 L510,88 L520,110 L530,121 L540,130 L550,130 L560,119 L570,125 L580,123 L590,116 L600,110 L610,103 L620,107 L630,100 L640,107 L650,104 L660,114 L670,112 L680,120 L690,111 L700,113 L710,110 L720,110 L730,111 L740,115 L745,160 L760,240 L770,243 L780,247 L790,250 L800,245 L810,248 L820,245 L830,235 L840,243 L850,240 L860,242 L870,253 L880,255 L890,254 L900,255 L910,246 L920,250 L930,250 L940,264 L950,262 L962,265 L973,269 L985,268" fill="none" stroke="#e0243a" stroke-width="15" stroke-linejoin="round" clip-path="url(#dn4)"/>
<path d="M55,75 L64,67 L73,67 L82,69 L91,72 L100,68 L110,64 L120,64 L130,67 L140,75 L150,72 L160,70 L170,81 L180,80 L190,92 L200,100 L210,89 L220,88 L230,81 L240,75 L250,91 L260,110 L270,125 L280,139 L290,133 L300,145 L310,135 L320,145 L330,135 L340,129 L350,130 L360,123 L370,118 L380,121 L390,106 L400,105 L410,99 L420,101 L430,98 L440,95 L450,84 L460,60 L470,90 L480,110 L490,90 L500,75 L510,88 L520,110 L530,121 L540,130 L550,130 L560,119 L570,125 L580,123 L590,116 L600,110 L610,103 L620,107 L630,100 L640,107 L650,104 L660,114 L670,112 L680,120 L690,111 L700,113 L710,110 L720,110 L730,111 L740,115 L745,160 L760,240 L770,243 L780,247 L790,250 L800,245 L810,248 L820,245 L830,235 L840,243 L850,240 L860,242 L870,253 L880,255 L890,254 L900,255 L910,246 L920,250 L930,250 L940,264 L950,262 L962,265 L973,269 L985,268" fill="none" stroke="#047a62" stroke-width="15" stroke-linejoin="round" clip-path="url(#up4)"/>
<circle cx="985" cy="268" r="20" fill="#e0243a"/>
</svg>
<svg style="position:absolute;left:945px;top:550px" width="90" height="27" viewBox="0 0 1080 324">
<defs>
<clipPath id="up5"><rect x="0" y="0" width="1080" height="240"/></clipPath>
<clipPath id="dn5"><rect x="0" y="240" width="1080" height="84"/></clipPath>
<linearGradient id="gr5" x1="0" y1="0" x2="0" y2="1"><stop offset="0" stop-color="#e0243a" stop-opacity="0.12"/><stop offset="1" stop-color="#e0243a" stop-opacity="0.5"/></linearGradient>
<linearGradient id="gg5" x1="0" y1="0" x2="0" y2="1"><stop offset="0" stop-color="#047a62" stop-opacity="0.45"/><stop offset="1" stop-color="#047a62" stop-opacity="0.1"/></linearGradient>
</defs>
<rect x="52" y="233" width="14" height="14" fill="#8c9399"/><rect x="101" y="233" width="14" height="14" fill="#8c9399"/><rect x="150" y="233" width="14" height="14" fill="#8c9399"/><rect x="199" y="233" width="14" height="14" fill="#8c9399"/><rect x="248" y="233" width="14" height="14" fill="#8c9399"/><rect x="297" y="233" width="14" height="14" fill="#8c9399"/><rect x="346" y="233" width="14" height="14" fill="#8c9399"/><rect x="395" y="233" width="14" height="14" fill="#8c9399"/><rect x="444" y="233" width="14" height="14" fill="#8c9399"/><rect x="493" y="233" width="14" height="14" fill="#8c9399"/><rect x="542" y="233" width="14" height="14" fill="#8c9399"/><rect x="591" y="233" width="14" height="14" fill="#8c9399"/><rect x="640" y="233" width="14" height="14" fill="#8c9399"/><rect x="689" y="233" width="14" height="14" fill="#8c9399"/><rect x="738" y="233" width="14" height="14" fill="#8c9399"/><rect x="787" y="233" width="14" height="14" fill="#8c9399"/><rect x="836" y="233" width="14" height="14" fill="#8c9399"/><rect x="885" y="233" width="14" height="14" fill="#8c9399"/><rect x="934" y="233" width="14" height="14" fill="#8c9399"/><rect x="983" y="233" width="14" height="14" fill="#8c9399"/><rect x="1032" y="233" width="14" height="14" fill="#8c9399"/>
<path d="M55,170 L68,162 L80,150 L90,137 L100,125 L110,133 L120,129 L130,140 L140,118 L150,90 L165,65 L178,81 L190,100 L200,104 L210,105 L220,107 L230,116 L240,125 L250,115 L260,109 L270,105 L280,126 L290,140 L300,137 L310,141 L320,134 L330,130 L340,141 L350,162 L360,175 L370,180 L380,180 L390,190 L400,195 L410,197 L420,211 L430,222 L440,230 L451,175 L462,115 L471,169 L480,210 L490,224 L500,235 L510,235 L520,248 L530,255 L540,253 L550,262 L560,260 L570,257 L580,238 L590,235 L600,241 L610,237 L620,238 L630,245 L640,238 L650,231 L660,225 L670,220 L680,217 L690,217 L700,215 L710,209 L720,194 L730,190 L740,198 L750,210 L760,255 L770,241 L780,235 L790,241 L800,236 L810,246 L820,245 L830,232 L840,237 L850,225 L860,224 L870,231 L880,225 L890,236 L900,243 L910,245 L920,238 L930,247 L940,243 L950,242 L960,251 L970,250 L980,228 L990,205 L1000,205 L1000,240 L55,240 Z" fill="url(#gr5)" clip-path="url(#dn5)"/>
<path d="M55,170 L68,162 L80,150 L90,137 L100,125 L110,133 L120,129 L130,140 L140,118 L150,90 L165,65 L178,81 L190,100 L200,104 L210,105 L220,107 L230,116 L240,125 L250,115 L260,109 L270,105 L280,126 L290,140 L300,137 L310,141 L320,134 L330,130 L340,141 L350,162 L360,175 L370,180 L380,180 L390,190 L400,195 L410,197 L420,211 L430,222 L440,230 L451,175 L462,115 L471,169 L480,210 L490,224 L500,235 L510,235 L520,248 L530,255 L540,253 L550,262 L560,260 L570,257 L580,238 L590,235 L600,241 L610,237 L620,238 L630,245 L640,238 L650,231 L660,225 L670,220 L680,217 L690,217 L700,215 L710,209 L720,194 L730,190 L740,198 L750,210 L760,255 L770,241 L780,235 L790,241 L800,236 L810,246 L820,245 L830,232 L840,237 L850,225 L860,224 L870,231 L880,225 L890,236 L900,243 L910,245 L920,238 L930,247 L940,243 L950,242 L960,251 L970,250 L980,228 L990,205 L1000,205 L1000,240 L55,240 Z" fill="url(#gg5)" clip-path="url(#up5)"/>
<path d="M55,170 L68,162 L80,150 L90,137 L100,125 L110,133 L120,129 L130,140 L140,118 L150,90 L165,65 L178,81 L190,100 L200,104 L210,105 L220,107 L230,116 L240,125 L250,115 L260,109 L270,105 L280,126 L290,140 L300,137 L310,141 L320,134 L330,130 L340,141 L350,162 L360,175 L370,180 L380,180 L390,190 L400,195 L410,197 L420,211 L430,222 L440,230 L451,175 L462,115 L471,169 L480,210 L490,224 L500,235 L510,235 L520,248 L530,255 L540,253 L550,262 L560,260 L570,257 L580,238 L590,235 L600,241 L610,237 L620,238 L630,245 L640,238 L650,231 L660,225 L670,220 L680,217 L690,217 L700,215 L710,209 L720,194 L730,190 L740,198 L750,210 L760,255 L770,241 L780,235 L790,241 L800,236 L810,246 L820,245 L830,232 L840,237 L850,225 L860,224 L870,231 L880,225 L890,236 L900,243 L910,245 L920,238 L930,247 L940,243 L950,242 L960,251 L970,250 L980,228 L990,205 L1000,205" fill="none" stroke="#e0243a" stroke-width="15" stroke-linejoin="round" clip-path="url(#dn5)"/>
<path d="M55,170 L68,162 L80,150 L90,137 L100,125 L110,133 L120,129 L130,140 L140,118 L150,90 L165,65 L178,81 L190,100 L200,104 L210,105 L220,107 L230,116 L240,125 L250,115 L260,109 L270,105 L280,126 L290,140 L300,137 L310,141 L320,134 L330,130 L340,141 L350,162 L360,175 L370,180 L380,180 L390,190 L400,195 L410,197 L420,211 L430,222 L440,230 L451,175 L462,115 L471,169 L480,210 L490,224 L500,235 L510,235 L520,248 L530,255 L540,253 L550,262 L560,260 L570,257 L580,238 L590,235 L600,241 L610,237 L620,238 L630,245 L640,238 L650,231 L660,225 L670,220 L680,217 L690,217 L700,215 L710,209 L720,194 L730,190 L740,198 L750,210 L760,255 L770,241 L780,235 L790,241 L800,236 L810,246 L820,245 L830,232 L840,237 L850,225 L860,224 L870,231 L880,225 L890,236 L900,243 L910,245 L920,238 L930,247 L940,243 L950,242 L960,251 L970,250 L980,228 L990,205 L1000,205" fill="none" stroke="#047a62" stroke-width="15" stroke-linejoin="round" clip-path="url(#up5)"/>
<circle cx="1000" cy="205" r="20" fill="#047a62"/>
</svg>
</body></html>
